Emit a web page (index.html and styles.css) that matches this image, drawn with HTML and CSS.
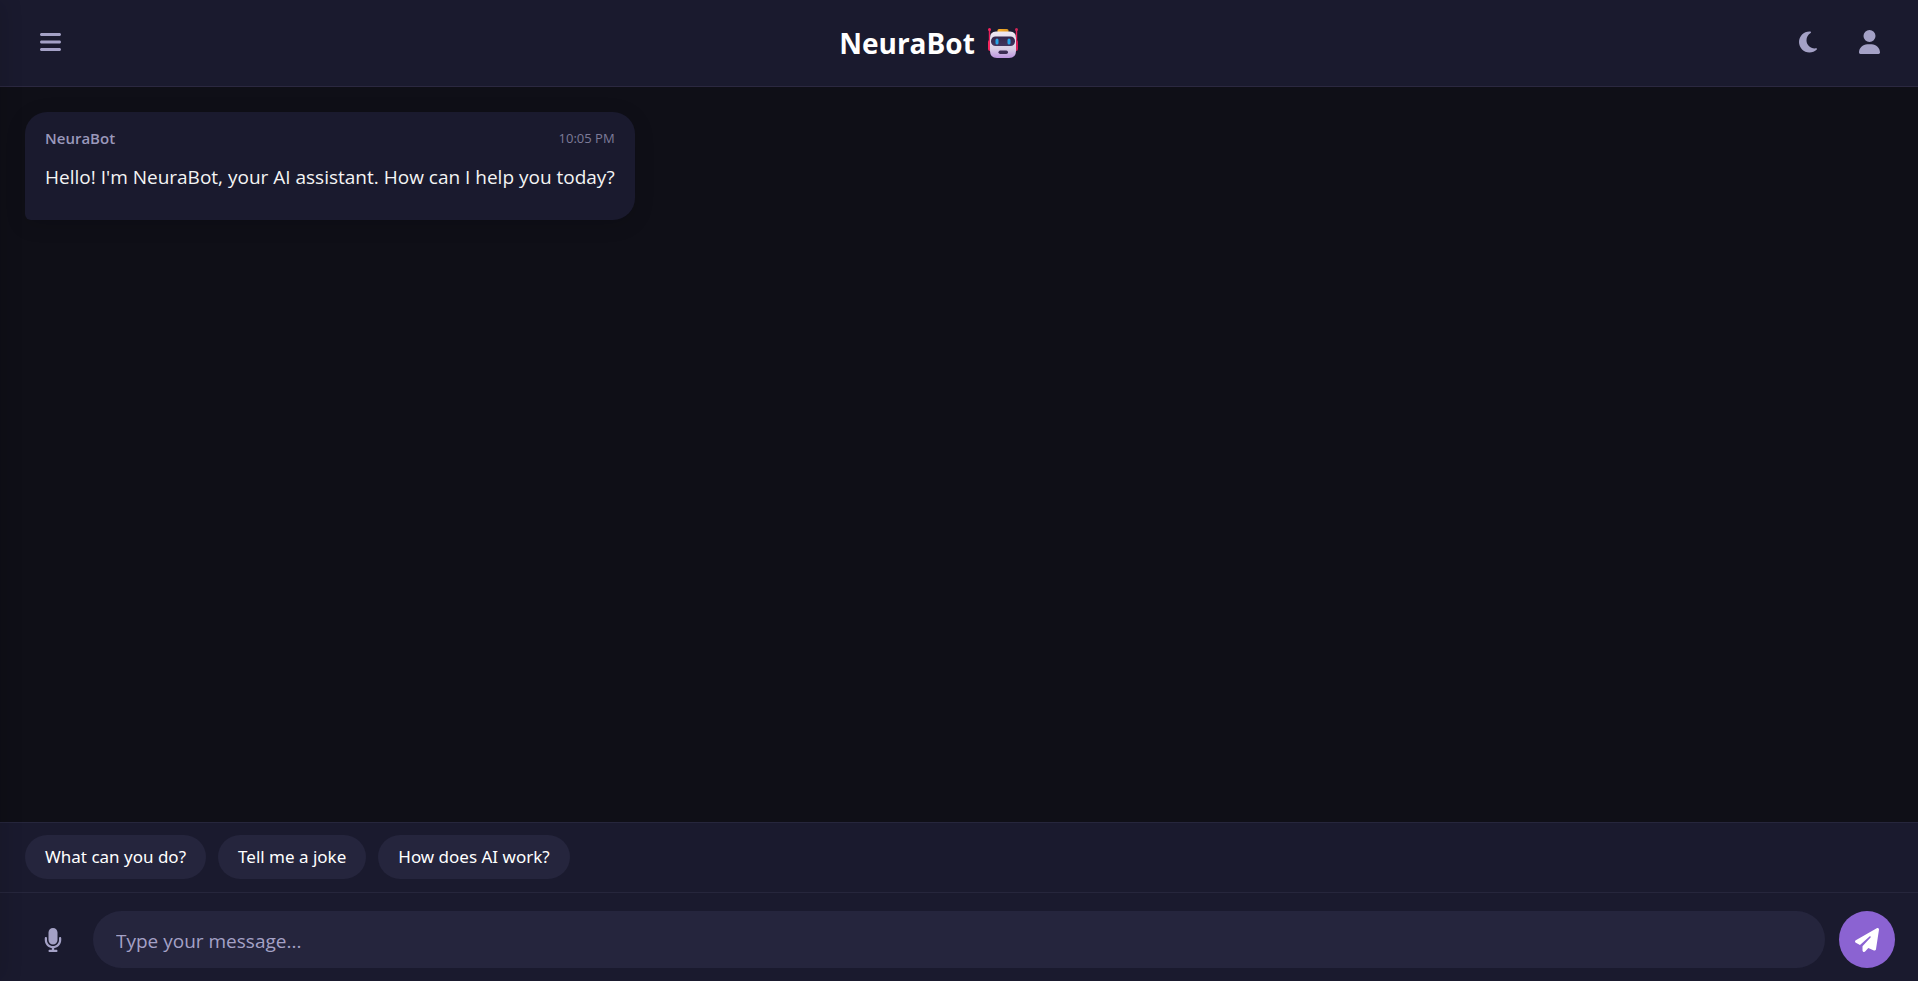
FILE: index.html
```html
<!DOCTYPE html>
<html lang="en">
<head>
<meta charset="utf-8">
<meta name="viewport" content="width=device-width, initial-scale=1">
<title>NeuraBot</title>
<link rel="stylesheet" href="styles.css">
</head>
<body>
<div class="app">
  <header class="header">
    <button class="icon-button" type="button" aria-label="Open menu">
      <svg class="icon" viewBox="0 0 448 512" aria-hidden="true"><path d="M0 96C0 78.3 14.3 64 32 64H416c17.7 0 32 14.3 32 32s-14.3 32-32 32H32C14.3 128 0 113.7 0 96zM0 256c0-17.7 14.3-32 32-32H416c17.7 0 32 14.3 32 32s-14.3 32-32 32H32c-17.7 0-32-14.3-32-32zM448 416c0 17.7-14.3 32-32 32H32c-17.7 0-32-14.3-32-32s14.3-32 32-32H416c17.7 0 32 14.3 32 32z"/></svg>
    </button>
    <h1 class="title">
      NeuraBot
      <svg class="robot" viewBox="0 0 32 32" role="img" aria-label="Robot">
        <defs>
          <linearGradient id="face" x1="0" y1="0" x2="0" y2="1"><stop offset="0" stop-color="#eee9f2"/><stop offset=".65" stop-color="#d9cfe6"/><stop offset="1" stop-color="#bd94df"/></linearGradient>
          <linearGradient id="hat" x1="0" y1="0" x2="1" y2="0"><stop offset="0" stop-color="#ffb52c"/><stop offset="1" stop-color="#d69222"/></linearGradient>
          <linearGradient id="visor" x1="0" y1="0" x2="0" y2="1"><stop offset="0" stop-color="#33264a"/><stop offset="1" stop-color="#423760"/></linearGradient>
        </defs>
        <path fill="#e81f5b" d="M1.8 3h1.4v12H1.8zM28.8 3h1.4v12h-1.4z"/>
        <circle cx="2.5" cy="2.5" r="1.5" fill="#f4255f"/><circle cx="29.5" cy="2.5" r="1.5" fill="#d12557"/>
        <rect x="1" y="13" width="4" height="11" rx="2" fill="#f6265f"/><rect x="27" y="13" width="4" height="11" rx="2" fill="#d41f58"/>
        <path fill="url(#hat)" d="M10.500 5V3.500Q10.500 2 12 2h8q1.500 0 1.500 1.500V5z"/>
        <path fill="url(#face)" d="M9 4.500h14q6 0 6 6.500v13q0 7-7 7H10q-7 0-7-7V11q0-6.500 6-6.500z"/>
        <rect x="4" y="9.500" width="24" height="9.500" rx="4.500" fill="url(#visor)"/>
        <rect x="8.500" y="11.500" width="3" height="6" rx="1.500" fill="#25a5e7"/><rect x="20.500" y="11.500" width="3" height="6" rx="1.500" fill="#25a5e7"/>
        <rect x="11.500" y="23.500" width="9.500" height="3.500" rx="1.700" fill="#3c2d54"/>
      </svg>
    </h1>
    <div class="header-actions">
      <button class="icon-button" type="button" aria-label="Switch theme">
        <svg class="icon" viewBox="0 0 384 512" aria-hidden="true"><path d="M223.500 32C100 32 0 132.300 0 256S100 480 223.500 480c60.600 0 115.500-24.200 155.800-63.400c5-4.900 6.300-12.500 3.100-18.700s-10.100-9.700-17-8.500c-9.800 1.700-19.800 2.600-30.100 2.600c-96.900 0-175.500-78.800-175.500-176c0-65.800 36-123.100 89.300-153.300c6.100-3.500 9.200-10.500 7.700-17.300s-7.300-11.900-14.300-12.500c-6.300-.5-12.600-.8-19-.8z"/></svg>
      </button>
      <button class="icon-button" type="button" aria-label="Profile">
        <svg class="icon" viewBox="0 0 448 512" aria-hidden="true"><path d="M224 256A128 128 0 1 0 224 0a128 128 0 1 0 0 256zm-45.700 48C79.800 304 0 383.800 0 482.300C0 498.700 13.300 512 29.700 512H418.300c16.400 0 29.700-13.300 29.700-29.700C448 383.800 368.200 304 269.700 304H178.300z"/></svg>
      </button>
    </div>
  </header>

  <main class="chat">
    <article class="message">
      <div class="message-meta">
        <span class="message-sender">NeuraBot</span>
        <time class="message-time">10:05 PM</time>
      </div>
      <p class="message-text">Hello! I'm NeuraBot, your AI assistant. How can I help you today?</p>
    </article>
  </main>

  <div class="suggestions">
    <button class="chip" type="button">What can you do?</button>
    <button class="chip" type="button">Tell me a joke</button>
    <button class="chip" type="button">How does AI work?</button>
  </div>

  <form class="composer">
    <button class="icon-button" type="button" aria-label="Voice input">
      <svg class="icon" viewBox="0 0 384 512" aria-hidden="true"><path d="M192 0C139 0 96 43 96 96V256c0 53 43 96 96 96s96-43 96-96V96c0-53-43-96-96-96zM64 216c0-13.300-10.700-24-24-24s-24 10.700-24 24v40c0 89.100 66.200 162.700 152 174.400V464H120c-13.300 0-24 10.700-24 24s10.700 24 24 24h72 72c13.300 0 24-10.700 24-24s-10.700-24-24-24H216V430.400c85.800-11.700 152-85.300 152-174.400V216c0-13.300-10.700-24-24-24s-24 10.700-24 24v40c0 70.700-57.300 128-128 128s-128-57.300-128-128V216z"/></svg>
    </button>
    <input class="composer-input" type="text" placeholder="Type your message..." aria-label="Type your message">
    <button class="send-button" type="submit" aria-label="Send">
      <svg class="icon" viewBox="0 0 512 512" aria-hidden="true"><path d="M498.100 5.600c10.100 7 15.400 19.100 13.500 31.200l-64 416c-1.500 9.700-7.400 18.200-16 23s-18.900 5.400-28 1.600L284 427.700l-68.500 74.100c-8.900 9.700-22.900 12.900-35.200 8.100S160 493.200 160 480V396.400c0-4 1.500-7.800 4.200-10.700L331.800 202.800c5.800-6.300 5.600-16-.4-22s-15.700-6.400-22-.7L106 360.800 17.700 316.600C7.100 311.300 .3 300.700 0 288.900s5.900-22.800 16.100-28.700l448-256c10.700-6.100 23.900-5.500 34 1.400z"/></svg>
    </button>
  </form>
</div>
</body>
</html>
```
FILE: styles.css
```css
* {
  box-sizing: border-box;
}

body {
  margin: 0;
  background: #0f0f17;
  color: #fff;
  font-family: "Segoe UI", "Open Sans", "Noto Sans", sans-serif;
  font-size: 18px;
}

button,
input {
  font: inherit;
  border: 0;
}

button {
  cursor: pointer;
}

.app {
  display: flex;
  flex-direction: column;
  height: 100vh;
}

.app::before {
  content: "";
  position: fixed;
  top: 0;
  bottom: 0;
  left: -20px;
  width: 20px;
  box-shadow: 4px 0 20px rgba(0, 0, 0, 0.12);
  pointer-events: none;
}

.header {
  display: flex;
  align-items: center;
  justify-content: space-between;
  padding: 16px 22px 16px 24px;
  background: #1a1a2e;
  border-bottom: 1px solid #2b2840;
}

.icon-button {
  display: grid;
  place-items: center;
  width: 52px;
  height: 54px;
  padding: 0 0 3px;
  background: transparent;
  color: #a4a1c6;
}

.icon {
  height: 24px;
  fill: currentColor;
}

.title {
  display: flex;
  align-items: center;
  gap: 12px;
  margin: 0;
  font-size: 28px;
  line-height: 36px;
  font-weight: 700;
}

.robot {
  width: 32px;
  height: 32px;
}

.header-actions {
  display: flex;
  gap: 10px;
}

.chat {
  flex: 1;
  min-height: 0;
  padding: 25px;
  overflow-y: auto;
}

.message {
  width: fit-content;
  max-width: 80%;
  padding: 14px 20px 27px;
  background: #1a1a2e;
  border-radius: 22px 22px 22px 6px;
  box-shadow: 0 4px 20px rgba(0, 0, 0, 0.15);
}

.message-meta {
  display: flex;
  justify-content: space-between;
  line-height: 24px;
  margin-bottom: 11px;
}

.message-sender {
  color: #9a98bb;
  font-size: 15px;
  font-weight: 600;
}

.message-time {
  color: #7d7b98;
  font-size: 13px;
}

.message-text {
  margin: 0;
  font-size: 19px;
  line-height: 32px;
  color: #f4f4f4;
}

.suggestions {
  display: flex;
  gap: 12px;
  padding: 12px 25px 13px;
  background: #1a1a2e;
  border-top: 1px solid #26263c;
}

.chip {
  padding: 10px 20px;
  background: #25253d;
  border-radius: 22px;
  color: #fff;
  font-family: "Segoe UI", "Noto Sans", "Open Sans", sans-serif;
  font-size: 17px;
  line-height: 24px;
}

.composer {
  display: flex;
  align-items: center;
  gap: 14px;
  padding: 18px 23px 13px 27px;
  background: #1a1a2e;
  border-top: 1px solid #26263c;
}

.composer .icon-button {
  padding: 0;
}

.composer-input {
  flex: 1;
  min-width: 0;
  height: 57px;
  padding: 2px 23px 0;
  background: #25253d;
  border-radius: 29px;
  color: #fff;
  font-size: 19px;
}

.composer-input::placeholder {
  color: #a4a1c6;
  opacity: 1;
}

.send-button {
  display: grid;
  place-items: center;
  width: 56px;
  height: 57px;
  padding: 0;
  background: #8b63d2;
  border-radius: 50%;
  color: #fff;
}
```
